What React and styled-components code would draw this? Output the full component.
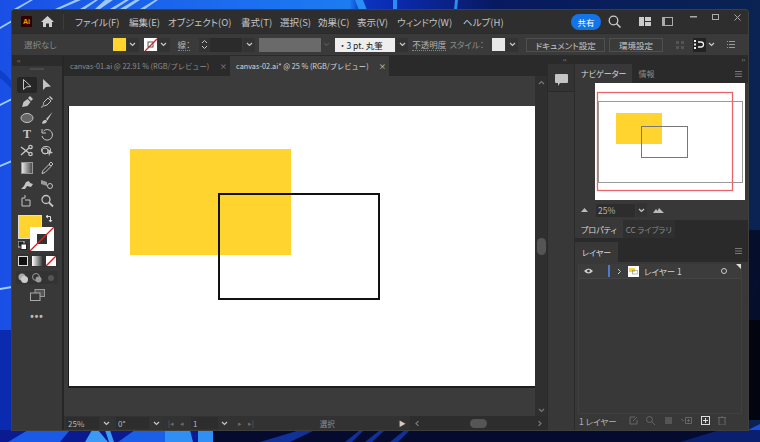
import React from "react";
import styled, { createGlobalStyle } from "styled-components";

const GlobalStyle = createGlobalStyle`
  html, body {
    margin: 0;
    padding: 0;
    width: 760px;
    height: 442px;
    overflow: hidden;
    background: #0a2a8c;
    font-family: "Noto Sans CJK JP", "Liberation Sans", sans-serif;
  }
`;

const Desktop = styled.div`
  position: relative;
  width: 760px;
  height: 442px;
  overflow: hidden;
`;

const Wallpaper = styled.svg`
  position: absolute;
  inset: 0;
`;

const Window = styled.div`
  position: absolute;
  left: 12px;
  top: 10px;
  width: 736px;
  height: 420px;
  background: #323232;
  border-radius: 3px 3px 0 0;
  box-shadow: 0 0 0 1px #3f3f3f;
  display: flex;
  flex-direction: column;
  color: #c8c8c8;
  overflow: hidden;
`;

/* title bar */
const TitleBar = styled.div`
  height: 23px;
  flex: none;
  background: #2e2e2e;
  display: flex;
  align-items: center;
  padding-left: 9px;
`;

const AiLogo = styled.div`
  width: 11px;
  height: 11px;
  background: #330000;
  color: #ff9a00;
  font: bold 7px "Liberation Sans", sans-serif;
  display: flex;
  align-items: center;
  justify-content: center;
  border-radius: 1px;
`;

const HomeBtn = styled.div`
  margin-left: 9px;
  width: 14px;
  display: flex;
  padding-right: 8px;
  border-right: 1px solid #3c3c3c;
  height: 16px;
  align-items: center;
`;

const Menu = styled.div`
  display: flex;
  margin-left: 11px;
  font-size: 9.5px;
  color: #c4c4c4;
  white-space: nowrap;
  font-feature-settings: "palt";
`;

const MenuItem = styled.span`
  width: ${(p) => p.$w}px;
`;

const ShareBtn = styled.div`
  width: 30px;
  height: 16px;
  border-radius: 8px;
  background: #1473e6;
  color: #fff;
  font-size: 8.5px;
  display: flex;
  align-items: center;
  justify-content: center;
`;

const TitleTools = styled.div`
  margin-left: auto;
  display: flex;
  align-items: center;
`;

const TitleIcon = styled.div`
  display: flex;
  margin-left: ${(p) => p.$left || 0}px;
`;

const WinBtn = styled.div`
  width: 22px;
  height: 13px;
  margin-top: -9px;
  margin-left: ${(p) => p.$left || 0}px;
  display: flex;
  align-items: center;
  justify-content: center;
`;

/* control bar */
const ControlBar = styled.div`
  height: 23px;
  flex: none;
  background: #3a3a3a;
  display: flex;
  align-items: center;
  padding-left: 12px;
  font-size: 8.5px;
  border-top: 1px solid #2b2b2b;
  border-bottom: 1px solid #2b2b2b;
  box-sizing: border-box;
  white-space: nowrap;
  font-feature-settings: "palt";
`;

const Muted = styled.span`
  color: ${(p) => p.$color || "#8a8a8a"};
  margin-left: ${(p) => p.$left || 0}px;
  border-bottom: ${(p) => (p.$line ? "1px dotted #888" : "none")};
  line-height: 11px;
`;

const Swatch = styled.div`
  width: 13px;
  height: 13px;
  background: ${(p) => p.$color};
  margin-left: ${(p) => p.$left || 0}px;
  display: flex;
`;

const Caret = styled.div`
  width: ${(p) => p.$w || 12}px;
  height: 14px;
  background: ${(p) => p.$bg || "#333"};
  display: flex;
  align-items: center;
  justify-content: center;
  margin-left: ${(p) => p.$left ?? 1}px;
`;

const Field = styled.div`
  width: ${(p) => p.$w}px;
  height: 14px;
  background: ${(p) => p.$bg || "#2b2b2b"};
  color: ${(p) => p.$color || "#ccc"};
  margin-left: ${(p) => p.$left || 0}px;
  display: flex;
  align-items: center;
  font-size: 8.5px;
  padding-left: ${(p) => p.$pad || 0}px;
  box-sizing: border-box;
  overflow: hidden;
`;

const BarBtn = styled.div`
  height: 14px;
  box-sizing: border-box;
  width: ${(p) => p.$w}px;
  margin-left: ${(p) => p.$left || 0}px;
  border: 1px solid #505050;
  display: flex;
  align-items: center;
  justify-content: center;
  font-size: 8.5px;
  color: #c4c4c4;
`;

/* body */
const Body = styled.div`
  flex: 1;
  display: flex;
  min-height: 0;
`;

const ToolPanel = styled.div`
  width: 50px;
  flex: none;
  background: #383838;
  border-right: 2px solid #262626;
  display: flex;
  flex-direction: column;
  align-items: center;
`;

const ToolPanelTop = styled.div`
  width: 100%;
  height: 10px;
  background: #2b2b2b;
  color: #999;
  font-size: 6px;
  line-height: 9px;
  padding-left: 5px;
  box-sizing: border-box;
`;

const Grip = styled.div`
  width: 14px;
  height: 2px;
  background: #4a4a4a;
  margin: 2px 0 7px;
`;

const ToolGrid = styled.div`
  display: grid;
  grid-template-columns: 20px 20px;
  grid-auto-rows: 16.5px;
  justify-items: center;
  align-items: center;
`;

const Tool = styled.div`
  width: 20px;
  height: 16px;
  border-radius: 2px;
  background: ${(p) => (p.$active ? "#262626" : "transparent")};
  display: flex;
  align-items: center;
  justify-content: center;
  color: #c8c8c8;
  font: bold 12px "Liberation Serif", serif;
`;

const ColorBlock = styled.div`
  position: relative;
  width: 38px;
  height: 38px;
  margin-top: 6px;
  flex: none;
`;

const Fill = styled.div`
  position: absolute;
  left: 0;
  top: 0;
  width: 24px;
  height: 24px;
  background: #ffd42e;
  border: 1px solid #ddd;
  box-sizing: border-box;
`;

const Stroke = styled.svg`
  position: absolute;
  left: 12px;
  top: 12px;
`;

const Mini = styled.svg`
  position: absolute;
  left: ${(p) => p.$x}px;
  top: ${(p) => p.$y}px;
`;

const ModeRow = styled.div`
  display: flex;
  margin-top: ${(p) => p.$top}px;
  background: #333;
`;

const ModeCell = styled.div`
  width: 14px;
  height: 13px;
  display: flex;
  align-items: center;
  justify-content: center;
`;

const ScreenMode = styled.div`
  margin-top: 5px;
  display: flex;
`;

const Dots = styled.div`
  margin-top: 9px;
  color: #bbb;
  font: bold 10px "Liberation Sans", sans-serif;
  letter-spacing: 1px;
`;

const DocArea = styled.div`
  width: 483px;
  flex: none;
  display: flex;
  flex-direction: column;
  background: #3b3b3b;
`;

const Tabs = styled.div`
  height: 20px;
  flex: none;
  background: #2a2a2a;
  display: flex;
  font-size: 7.3px;
  white-space: nowrap;
`;

const Tab = styled.div`
  width: ${(p) => p.$w}px;
  padding: 0 3px 0 6px;
  box-sizing: border-box;
  display: flex;
  align-items: center;
  justify-content: space-between;
  color: ${(p) => (p.$active ? "#d6d6d6" : "#8c8c8c")};
  background: ${(p) => (p.$active ? "#3b3b3b" : "transparent")};
`;

const CanvasRow = styled.div`
  flex: 1;
  display: flex;
  min-height: 0;
`;

const Canvas = styled.div`
  flex: 1;
  display: flex;
  flex-direction: column;
  padding: 30px 0 30px 5px;
  box-sizing: border-box;
`;

const Artboard = styled.svg`
  display: block;
  box-shadow: 0 1px 0 1px #1e1e1e;
  background: #fff;
`;

const VScroll = styled.div`
  width: 12px;
  flex: none;
  background: #2f2f2f;
  display: flex;
  flex-direction: column;
  align-items: center;
  justify-content: space-between;
  padding: 4px 0 3px;
  box-sizing: border-box;
`;

const ScrollThumb = styled.div`
  width: 9px;
  height: 17px;
  border-radius: 5px;
  background: #555;
`;

const StatusBar = styled.div`
  height: 14px;
  flex: none;
  background: #323232;
  display: flex;
  align-items: center;
  font-size: 8px;
  color: #b4b4b4;
`;

const StatusField = styled.div`
  width: ${(p) => p.$w}px;
  height: 12px;
  background: #2d2d2d;
  margin-left: ${(p) => p.$left || 0}px;
  display: flex;
  align-items: center;
  padding-left: 2px;
  box-sizing: border-box;
`;

const StatusText = styled.div`
  width: 139px;
  margin-left: 4px;
  text-align: center;
  color: #8f8f8f;
  font-size: 7.5px;
`;

const Dim = styled.div`
  color: ${(p) => p.$color || "#6a6a6a"};
  font-size: 7px;
  margin-left: ${(p) => p.$left || 0}px;
  display: flex;
`;

const HScroll = styled.div`
  flex: 1;
  height: 14px;
  margin-left: 4px;
  background: #2d2d2d;
  display: flex;
  align-items: center;
  justify-content: space-between;
  padding: 0 4px;
  box-sizing: border-box;
`;

const HThumb = styled.div`
  width: 17px;
  height: 9px;
  border-radius: 5px;
  background: #555;
`;

const RightDock = styled.div`
  flex: 1;
  display: flex;
  flex-direction: column;
  background: #2a2a2a;
`;

const DockTop = styled.div`
  height: 8px;
  flex: none;
  display: flex;
  justify-content: space-between;
  padding: 0 3px 0 16px;
  font-size: 6px;
  line-height: 8px;
  color: #999;
`;

const DockColumns = styled.div`
  flex: 1;
  display: flex;
  min-height: 0;
`;

const CommentStrip = styled.div`
  width: 26px;
  margin: 0 1px;
  flex: none;
  background: #383838;
  display: flex;
  flex-direction: column;
  align-items: center;
`;

const CommentBtn = styled.div`
  width: 100%;
  height: 28px;
  background: #333;
  border-bottom: 1px solid #2a2a2a;
  display: flex;
  justify-content: center;
  padding-top: 10px;
  box-sizing: border-box;
`;

const Panels = styled.div`
  flex: 1;
  display: flex;
  flex-direction: column;
  min-width: 0;
`;

const PanelTabs = styled.div`
  height: ${(p) => p.$h || 19}px;
  flex: none;
  display: flex;
  background: #2a2a2a;
  font-size: 8px;
  align-items: flex-start;
  font-feature-settings: "palt";
`;

const PanelTab = styled.div`
  height: ${(p) => p.$h || 19}px;
  margin-top: ${(p) => p.$top || 0}px;
  padding: 0 ${(p) => p.$pad || 6}px;
  display: flex;
  align-items: center;
  color: ${(p) => (p.$active ? "#d8d8d8" : "#8a8a8a")};
  background: ${(p) => (p.$active ? "#383838" : p.$bare ? "transparent" : "#2f2f2f")};
  white-space: nowrap;
`;

const PanelMenu = styled.div`
  margin-left: auto;
  margin-right: 6px;
  align-self: center;
  display: flex;
`;

const Navigator = styled.div`
  height: 137px;
  flex: none;
  background: #383838;
  display: flex;
  flex-direction: column;
`;

const Preview = styled.svg`
  display: block;
  flex: none;
  background: #fff;
  margin-left: 20px;
`;

const ZoomRow = styled.div`
  height: 20px;
  flex: none;
  display: flex;
  align-items: center;
  padding-left: 6px;
  color: #b4b4b4;
  font-size: 8.5px;
`;

const ZoomField = styled.div`
  width: 39px;
  height: 13px;
  margin-left: 8px;
  padding-left: 2px;
  box-sizing: border-box;
  background: #2d2d2d;
  display: flex;
  align-items: center;
`;

const ZoomIcon = styled.svg`
  margin-left: ${(p) => p.$left || 0}px;
`;

const Layers = styled.div`
  flex: 1;
  background: #383838;
  padding: 1px 6px 0 3px;
  display: flex;
  flex-direction: column;
  min-height: 0;
`;

const LayerList = styled.div`
  flex: 1;
  border: 1px solid #404040;
  border-top: 0;
  display: flex;
  flex-direction: column;
`;

const LayerRow = styled.div`
  height: 14px;
  margin-top: 1px;
  border-bottom: 1px solid #444;
  background: #3c3c3c;
  display: flex;
  align-items: center;
  font-size: 8.5px;
  color: #cfcfcf;
  position: relative;
  flex: none;
  font-feature-settings: "palt";
`;

const Eye = styled.div`
  width: 18px;
  display: flex;
  justify-content: center;
`;

const ColorTag = styled.div`
  width: 2px;
  height: 12px;
  background: #4f79c9;
  margin-left: 11px;
`;

const Expand = styled.span`
  margin-left: 7px;
  display: flex;
`;

const Thumb = styled.svg`
  margin: 0 5px 0 6px;
  background: #fff;
  flex: none;
`;

const Corner = styled.div`
  position: absolute;
  right: 0;
  top: 0;
  width: 0;
  height: 0;
  border-top: 5px solid #ddd;
  border-left: 5px solid transparent;
`;

const Ring = styled.div`
  position: absolute;
  right: 14px;
  width: 4px;
  height: 4px;
  border: 1px solid #ccc;
  border-radius: 50%;
`;

const LayerFooter = styled.div`
  height: 16px;
  padding: 0 0 3px 1px;
  box-sizing: border-box;
  flex: none;
  display: flex;
  align-items: center;
  font-size: 8.5px;
  color: #b4b4b4;
  font-feature-settings: "palt";
`;

const FooterIcons = styled.div`
  display: flex;
  align-items: center;
  gap: 8.5px;
  margin-left: 12px;
`;

const chevronPaths = {
  down: "M1 1l2.500 2.500L6 1",
  up: "M1 4l2.500-2.500L6 4",
  left: "M4.500 0L2 2.500 4.500 5",
  right: "M2.500 0L5 2.500 2.500 5",
};

const Chevron = ({ color = "#c8c8c8", dir = "down" }) => (
  <svg width="7" height="5" viewBox="0 0 7 5">
    <path d={chevronPaths[dir]} fill="none" stroke={color} strokeWidth="1.2" />
  </svg>
);

const Ico = ({ children, w = 14, h = 14 }) => (
  <svg width={w} height={h} viewBox={`0 0 ${w} ${h}`}>
    {children}
  </svg>
);

const MenuIcon = () => (
  <svg width="7" height="6">
    <path d="M0 .5h7M0 3h7M0 5.500h7" stroke="#777" />
  </svg>
);

const c = "#c4c4c4";
const tools = [
  <Ico key="a"><path d="M3.500 1.500v10l3-2.600 4.500-.4z" fill="none" stroke={c} /></Ico>,
  <Ico key="b"><path d="M3 1v11l3-3 5-.5z" fill={c} /></Ico>,
  <Ico key="c"><path d="M2 12l1.500-5 4-3 3 3-3 4z" fill={c} /><path d="M8 3l2-2 3 3-2 2z" fill={c} /></Ico>,
  <Ico key="d"><path d="M1 12c3 1 2-4 3-5l4-4 3 3-4 4-3 1" fill="none" stroke={c} /><path d="M9 2l1-1 3 3-1 1z" fill={c} /></Ico>,
  <Ico key="e"><ellipse cx="7" cy="7" rx="6" ry="4.500" fill="#666" stroke={c} /></Ico>,
  <Ico key="f"><path d="M12.500 1L6 8l1.500 1.500zM2 12.500c0-2 2-4 4-3.500l1 1c0 2-3 3-5 2.500z" fill={c} /></Ico>,
  "T",
  <Ico key="h"><path d="M3.500 3A5.300 5.300 0 1 1 2 8" fill="none" stroke={c} /><path d="M2 1v4h4" fill="none" stroke={c} /></Ico>,
  <Ico key="i"><path d="M1 3l8 6M1 11l8-7" stroke={c} strokeWidth="1.400" /><circle cx="10.500" cy="3" r="1.700" fill="none" stroke={c} strokeWidth="1.300" /><circle cx="10.500" cy="10" r="1.700" fill="none" stroke={c} strokeWidth="1.300" /></Ico>,
  <Ico key="j"><ellipse cx="6" cy="6" rx="4.500" ry="3.500" fill="none" stroke={c} /><circle cx="5" cy="7" r="3" fill="none" stroke={c} /><path d="M8 5l5 4-3 .5-1 3z" fill={c} /></Ico>,
  <Ico key="k"><defs><linearGradient id="gr"><stop offset="0" stopColor="#eee" /><stop offset="1" stopColor="#444" /></linearGradient></defs><rect x="1.500" y="1.500" width="11" height="11" fill="url(#gr)" stroke="#999" /></Ico>,
  <Ico key="l"><path d="M2 12.500l1-3 6-6 2 2-6 6zM9 3l2-2 2 2-2 2z" fill="none" stroke={c} /></Ico>,
  <Ico key="m"><path d="M1 12l3-3 2-4 3-1 1 2 3 1-2 3-4-1-2 3z" fill={c} /></Ico>,
  <Ico key="n"><path d="M1 3l6 2v4L1 7z" fill="#999" /><circle cx="10" cy="9" r="2.500" fill="none" stroke={c} /></Ico>,
  <Ico key="o"><path d="M5 1v3H2v8h8V6H5" fill="none" stroke={c} /></Ico>,
  <Ico key="p"><circle cx="6" cy="5.500" r="4" fill="none" stroke={c} strokeWidth="1.300" /><path d="M9 8.500l4 4" stroke={c} strokeWidth="1.800" /></Ico>,
];

const menuItems = [
  ["ファイル(F)", 54],
  ["編集(E)", 39],
  ["オブジェクト(O)", 73],
  ["書式(T)", 39],
  ["選択(S)", 38],
  ["効果(C)", 39],
  ["表示(V)", 40],
  ["ウィンドウ(W)", 66],
  ["ヘルプ(H)", 42],
];

const App = () => (
  <Desktop>
    <GlobalStyle />
    <Wallpaper width="760" height="442" viewBox="0 0 760 442">
      <defs>
        <linearGradient id="wall" x1="0" y1="0" x2="1" y2="0">
          <stop offset="0" stopColor="#1a4fe6" />
          <stop offset="0.46" stopColor="#1c7cf2" />
          <stop offset="0.475" stopColor="#0c35c0" />
          <stop offset="0.52" stopColor="#0a2ab0" />
          <stop offset="0.6" stopColor="#0a2080" />
          <stop offset="0.65" stopColor="#071a60" />
          <stop offset="1" stopColor="#0a2352" />
        </linearGradient>
      </defs>
      <rect width="760" height="442" fill="url(#wall)" />
      <path d="M355 0h8l4 10h-8zM393 0h4v10h-4zM455 0h3l-1 10h-3z" fill="#2a8ff5" />
      <path d="M0 27L12 20v2L0 29zM0 165L12 160v2L0 167zM0 104L12 98v2L0 106zM0 288L12 286v2L0 290z" fill="#a0d0fa" />
      <path d="M14 9L30 0h3L18 9zM55 9L75 0h6L60 9zM80 9L95 0h3L85 9zM95 9L105 0h8L100 9zM110 9L125 0h4L115 9zM120 9L135 0h5L126 9zM140 9L155 0h3L145 9z" fill="#9cc8f8" />
      <path d="M0 70Q6 74 12 82V90Q6 82 0 78z" fill="#0e3fc8" />
      <path d="M0 330H12V442H0z" fill="#0a2bb0" />
      <path d="M0 430H760V442H0z" fill="#050b2e" />
      <path d="M0 430H210V442H0z" fill="#0a1a90" />
      <path d="M8 442L28 430H70L60 442z" fill="#1a5ae8" />
      <path d="M85 442L92 430H98L108 442zM105 430h5l4 12h-5z" fill="#3a9af5" />
      <path d="M118 442L135 430H165V442z" fill="#1a5fe8" />
      <path d="M165 430h25l3 12h-28zM198 430h15v12h-15z" fill="#2f8ff5" />
      <path d="M260 442L300 430h15L290 442zM345 442L360 430h4L352 442zM365 442L380 430h5L372 442zM390 442L405 430h5L398 442z" fill="#10309a" />
      <path d="M748 300Q754 285 760 275V282Q754 292 748 310z" fill="#132a6a" />
      <path d="M748 230H760V320H748z" fill="#050a25" opacity=".85" />
      <path d="M748 320H760V420H748z" fill="#020510" />
      <path d="M680 442L720 430H760V442z" fill="#0a1f70" />
      <path d="M748 430L760 424V430z" fill="#1a4fd8" />
    </Wallpaper>
    <Window>
      <TitleBar>
        <AiLogo>Ai</AiLogo>
        <HomeBtn>
          <svg width="13" height="11" viewBox="0 0 13 11">
            <path d="M6.500 0L0 6h2v5h3V7.500h3V11h3V6h2z" fill="#d0d0d0" />
          </svg>
        </HomeBtn>
        <Menu>
          {menuItems.map(([label, w]) => (
            <MenuItem key={label} $w={w}>{label}</MenuItem>
          ))}
        </Menu>
        <TitleTools>
          <ShareBtn>共有</ShareBtn>
          <TitleIcon $left={7}>
            <svg width="13" height="13" viewBox="0 0 13 13">
              <circle cx="5.500" cy="5.500" r="4.300" fill="none" stroke="#ccc" strokeWidth="1.300" />
              <path d="M8.500 8.500l4 4" stroke="#ccc" strokeWidth="1.500" />
            </svg>
          </TitleIcon>
          <TitleIcon $left={18}>
            <svg width="12" height="9" viewBox="0 0 12 9">
              <path d="M0 0h5v9H0zM6 0h6v4H6zM6 5h6v4H6z" fill="#ccc" />
            </svg>
          </TitleIcon>
          <TitleIcon $left={11}>
            <svg width="11" height="9" viewBox="0 0 11 9">
              <rect x=".5" y=".5" width="10" height="8" fill="none" stroke="#aaa" />
              <path d="M1 1h2v7H1z" fill="#aaa" />
            </svg>
          </TitleIcon>
          <WinBtn $left={9}>
            <svg width="7" height="2"><rect width="7" height="1.500" fill="#aaa" /></svg>
          </WinBtn>
          <WinBtn>
            <svg width="7" height="6"><rect x=".5" y=".5" width="6" height="5" fill="none" stroke="#aaa" /></svg>
          </WinBtn>
          <WinBtn>
            <svg width="7" height="7"><path d="M.5.500l6 6M6.500.500l-6 6" stroke="#aaa" /></svg>
          </WinBtn>
        </TitleTools>
      </TitleBar>

      <ControlBar>
        <Muted>選択なし</Muted>
        <Swatch $color="#ffd42e" $left={56} />
        <Caret><Chevron /></Caret>
        <Swatch $color="#fff" $left={5}>
          <svg width="13" height="13">
            <rect x="4" y="4" width="5" height="5" fill="none" stroke="#555" />
            <path d="M1 13L13 1" stroke="#e02020" strokeWidth="1.300" />
          </svg>
        </Swatch>
        <Caret><Chevron /></Caret>
        <Muted $left={8} $color="#b4b4b4" $line>線：</Muted>
        <Caret $w={11} $left={9}>
          <svg width="7" height="11" viewBox="0 0 7 11">
            <path d="M1 4l2.500-2.500L6 4M1 7l2.500 2.500L6 7" fill="none" stroke="#c8c8c8" />
          </svg>
        </Caret>
        <Field $w={32} />
        <Caret><Chevron /></Caret>
        <Field $w={62} $left={4} $bg="#6a6a6a" />
        <Caret $w={11} $left={0} $bg="#3a3a3a"><Chevron color="#555" /></Caret>
        <Field $w={60} $left={3} $bg="#eeeeee" $color="#222" $pad={5}>・ 3 pt. 丸筆</Field>
        <Caret $left={1}><Chevron /></Caret>
        <Muted $left={4} $color="#b4b4b4" $line>不透明度</Muted>
        <Muted $left={3}>スタイル：</Muted>
        <Swatch $color="#e8e8e8" $left={8} />
        <Caret><Chevron /></Caret>
        <BarBtn $w={79} $left={8}>ドキュメント設定</BarBtn>
        <BarBtn $w={54} $left={4}>環境設定</BarBtn>
        <Dim $left={13}>
          <svg width="8" height="8"><path d="M0 0h3v3H0zM5 0h3v3H5zM0 5h3v3H0zM5 5h3v3H5z" fill="#555" /></svg>
        </Dim>
        <Caret $w={13} $left={9} $bg="#222">
          <svg width="11" height="11" viewBox="0 0 11 11">
            <path d="M0 1h2v2H0zM0 4.500h2v2H0zM0 8h2v2H0z" fill="#eee" />
            <path d="M4 3h3a2.500 2.500 0 0 1 0 5H4" fill="none" stroke="#eee" strokeWidth="1.300" />
          </svg>
        </Caret>
        <Caret $w={8} $left={1} $bg="none"><Chevron /></Caret>
        <Dim $left={12}>
          <svg width="8" height="7"><path d="M2 .5h6M2 3.500h6M2 6.500h6M0 .5h1M0 3.500h1M0 6.500h1" stroke="#999" /></svg>
        </Dim>
      </ControlBar>

      <Body>
        <ToolPanel>
          <ToolPanelTop>‹‹</ToolPanelTop>
          <Grip />
          <ToolGrid>
            {tools.map((t, i) => (
              <Tool key={i} $active={i === 0}>{t}</Tool>
            ))}
          </ToolGrid>
          <ColorBlock>
            <Fill />
            <Stroke width="24" height="24" viewBox="0 0 24 24">
              <rect width="24" height="24" fill="#fff" />
              <rect x="7" y="7" width="10" height="10" fill="#333" />
              <path d="M0 24L24 0" stroke="#e02020" strokeWidth="1.300" />
            </Stroke>
            <Mini $x={27} $y={0} width="8" height="9" viewBox="0 0 8 9">
              <path d="M1 1.500h4.500V7M3 3L1 1.500 3 0M4 5l1.500 2L7 5" fill="none" stroke="#ddd" />
            </Mini>
            <Mini $x={0} $y={26} width="9" height="9" viewBox="0 0 9 9">
              <rect x="0" y="0" width="6" height="6" fill="#222" stroke="#ccc" />
              <rect x="3" y="3" width="5.500" height="5.500" fill="#fff" stroke="#222" />
            </Mini>
          </ColorBlock>
          <ModeRow $top={1}>
            <ModeCell>
              <svg width="10" height="10"><rect x=".5" y=".5" width="9" height="9" fill="#111" stroke="#ddd" /></svg>
            </ModeCell>
            <ModeCell>
              <svg width="10" height="10">
                <defs><linearGradient id="gm"><stop offset="0" stopColor="#fff" /><stop offset="1" stopColor="#444" /></linearGradient></defs>
                <rect width="10" height="10" fill="url(#gm)" />
              </svg>
            </ModeCell>
            <ModeCell>
              <svg width="10" height="10"><rect width="10" height="10" fill="#fff" /><path d="M0 10L10 0" stroke="#e02020" strokeWidth="1.500" /></svg>
            </ModeCell>
          </ModeRow>
          <ModeRow $top={4}>
            <ModeCell>
              <svg width="10" height="10"><circle cx="4" cy="4" r="3.500" fill="#aaa" /><circle cx="6.500" cy="6.500" r="3.500" fill="#ccc" /></svg>
            </ModeCell>
            <ModeCell>
              <svg width="10" height="10"><circle cx="4" cy="4" r="3.500" fill="none" stroke="#999" /><circle cx="6.500" cy="6.500" r="3" fill="#999" /></svg>
            </ModeCell>
            <ModeCell>
              <svg width="8" height="8"><circle cx="4" cy="4" r="3" fill="#555" /></svg>
            </ModeCell>
          </ModeRow>
          <ScreenMode>
            <svg width="15" height="13" viewBox="0 0 15 13">
              <rect x="5" y=".5" width="9.500" height="7" fill="#555" stroke="#999" />
              <rect x=".5" y="4" width="9.500" height="7.500" fill="#383838" stroke="#aaa" />
            </svg>
          </ScreenMode>
          <Dots>•••</Dots>
        </ToolPanel>

        <DocArea>
          <Tabs>
            <Tab $w={166}>canvas-01.ai @ 22.91 % (RGB/プレビュー)<span>×</span></Tab>
            <Tab $w={159} $active>canvas-02.ai* @ 25 % (RGB/プレビュー)<span>×</span></Tab>
          </Tabs>
          <CanvasRow>
            <Canvas>
              <Artboard width="466" height="280" viewBox="0 0 466 280">
                <rect x="61" y="43" width="161" height="106" fill="#ffd42e" />
                <rect x="150" y="88" width="160" height="105" fill="none" stroke="#111" strokeWidth="2" />
              </Artboard>
            </Canvas>
            <VScroll>
              <Chevron color="#777" dir="up" />
              <ScrollThumb />
              <Chevron color="#777" />
            </VScroll>
          </CanvasRow>
          <StatusBar>
            <StatusField $w={33} $left={2}>25%</StatusField>
            <Caret $w={13}><Chevron /></Caret>
            <StatusField $w={33} $left={3}>0°</StatusField>
            <Caret $w={12}><Chevron /></Caret>
            <Dim $left={6}>|◂</Dim>
            <Dim $left={6}>◂</Dim>
            <StatusField $w={27} $left={7}>1</StatusField>
            <Caret $w={12}><Chevron /></Caret>
            <Dim $left={7}>▸</Dim>
            <Dim $left={6}>▸|</Dim>
            <StatusText>選択</StatusText>
            <Dim $left={2} $color="#ccc">▶</Dim>
            <HScroll>
              <Chevron color="#777" dir="left" />
              <HThumb />
              <Chevron color="#777" dir="right" />
            </HScroll>
          </StatusBar>
        </DocArea>

        <RightDock>
          <DockTop><span>‹‹</span><span>››</span></DockTop>
          <DockColumns>
            <CommentStrip>
              <CommentBtn>
                <svg width="13" height="12" viewBox="0 0 13 12">
                  <path d="M1 0h11a1 1 0 0 1 1 1v7a1 1 0 0 1-1 1H5l-2 3V9H1a1 1 0 0 1-1-1V1a1 1 0 0 1 1-1z" fill="#c4c4c4" />
                </svg>
              </CommentBtn>
            </CommentStrip>
            <Panels>
              <PanelTabs>
                <PanelTab $active>ナビゲーター</PanelTab>
                <PanelTab $bare>情報</PanelTab>
                <PanelMenu><MenuIcon /></PanelMenu>
              </PanelTabs>
              <Navigator>
                <Preview width="150" height="117" viewBox="0 0 150 117">
                  <rect x="3.500" y="18.500" width="144" height="81" fill="none" stroke="#999" strokeWidth="1" />
                  <rect x="2.500" y="9.500" width="135" height="98" fill="none" stroke="#e8656b" strokeWidth="1.300" />
                  <rect x="21" y="30" width="46" height="31" fill="#ffd42e" />
                  <rect x="46.500" y="43.500" width="46" height="31" fill="none" stroke="#777" strokeWidth="1" />
                </Preview>
                <ZoomRow>
                  <svg width="7" height="4"><path d="M0 4h7L3.500 0z" fill="#bbb" /></svg>
                  <ZoomField>25%</ZoomField>
                  <Caret $w={11}><Chevron /></Caret>
                  <ZoomIcon $left={6} width="11" height="5"><path d="M0 5L3 1l1.500 2L6 0l5 5z" fill="#bbb" /></ZoomIcon>
                </ZoomRow>
              </Navigator>
              <PanelTabs $h={20}>
                <PanelTab $active $h={18}>プロパティ</PanelTab>
                <PanelTab $h={18} $pad={3}>CC ライブラリ</PanelTab>
              </PanelTabs>
              <PanelTabs $h={22}>
                <PanelTab $active $pad={7} $top={2} $h={20}>レイヤー</PanelTab>
                <PanelMenu><MenuIcon /></PanelMenu>
              </PanelTabs>
              <Layers>
                <LayerList>
                  <LayerRow>
                    <Eye>
                      <svg width="9" height="6" viewBox="0 0 9 6">
                        <path d="M0 3Q4.500-2 9 3 4.500 8 0 3z" fill="#ccc" />
                        <circle cx="4.500" cy="3" r="1.300" fill="#333" />
                      </svg>
                    </Eye>
                    <ColorTag />
                    <Expand>
                      <svg width="5" height="7"><path d="M1 1l2.500 2.500L1 6" fill="none" stroke="#ccc" /></svg>
                    </Expand>
                    <Thumb width="11" height="11" viewBox="0 0 11 11">
                      <rect x="1" y="2" width="6" height="4" fill="#ffd42e" />
                      <rect x="4.500" y="4.500" width="5" height="3.500" fill="none" stroke="#777" strokeWidth=".5" />
                    </Thumb>
                    レイヤー 1
                    <Ring />
                    <Corner />
                  </LayerRow>
                </LayerList>
                <LayerFooter>
                  1 レイヤー
                  <FooterIcons>
                    <svg width="9" height="9"><path d="M6 1H1v7h7V4M4 5l4-4" fill="none" stroke="#666" /></svg>
                    <svg width="9" height="9"><circle cx="3.500" cy="3.500" r="3" fill="none" stroke="#666" /><path d="M5.500 5.500L9 9" stroke="#666" /></svg>
                    <svg width="9" height="9"><rect x="1" y="1" width="7" height="7" fill="#555" /></svg>
                    <svg width="11" height="9"><path d="M0 3l3 2M4.500 1.500h6v6h-6zM7.500 3v3M6 4.500h3" fill="none" stroke="#666" /></svg>
                    <svg width="9" height="9"><rect x=".5" y=".5" width="8" height="8" fill="none" stroke="#ddd" /><path d="M4.500 2v5M2 4.500h5" stroke="#ddd" /></svg>
                    <svg width="8" height="9"><path d="M0 1.500h8M1 2v7h6V2M3 0h2" fill="none" stroke="#666" /></svg>
                  </FooterIcons>
                </LayerFooter>
              </Layers>
            </Panels>
          </DockColumns>
        </RightDock>
      </Body>
    </Window>
  </Desktop>
);

export default App;
